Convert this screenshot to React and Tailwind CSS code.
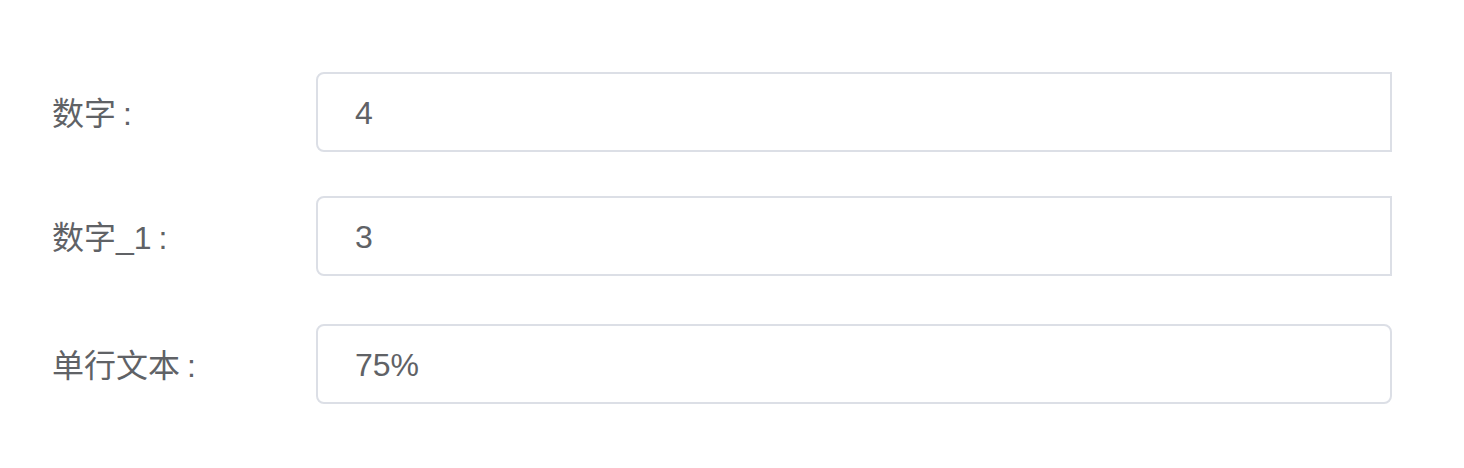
export default function App() {
  const rows = [
    { label: "数字", value: "4", mt: "mt-[72px]", rad: "rounded-l-[8px] rounded-r-none" },
    { label: "数字_1", value: "3", mt: "mt-[44px]", rad: "rounded-l-[8px] rounded-r-none" },
    { label: "单行文本", value: "75%", mt: "mt-[48px]", rad: "rounded-[8px]" },
  ];
  return (
    <div
      className="w-[1464px] h-[468px] bg-white flex flex-col"
      style={{ fontFamily: '"Liberation Sans", "Noto Sans CJK SC", sans-serif' }}
    >
      {rows.map((r) => (
        <div key={r.label} className={`flex items-center pl-[52px] ${r.mt}`}>
          <div className="w-[264px] text-[32px] text-[#606266] leading-none pt-[4px]">
            {r.label}
            <span className="ml-[7px]">:</span>
          </div>
          <div
            className={`w-[1076px] h-[80px] border-2 border-[#dcdfe6] flex items-center pl-[37px] pt-[2px] text-[32px] text-[#606266] ${r.rad}`}
          >
            {r.value}
          </div>
        </div>
      ))}
    </div>
  );
}
